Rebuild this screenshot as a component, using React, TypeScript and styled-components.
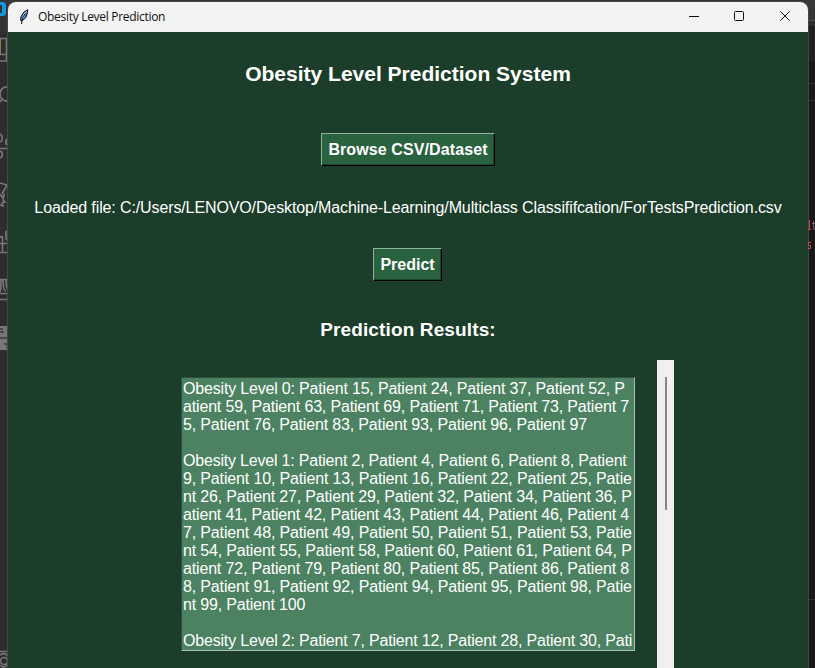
import React from "react";
import styled, { createGlobalStyle } from "styled-components";

const GlobalStyle = createGlobalStyle`
  html, body, #root { margin: 0; height: 100%; }
  body { overflow: hidden; background: #1e1e1e; }
  * { box-sizing: border-box; }
`;

const Desktop = styled.div`
  display: grid;
  grid-template-columns: 8px 800px 7px;
  width: 815px;
  height: 668px;
  overflow: hidden;
  background: linear-gradient(#373737 0 20px, #2d2d2d 40px);
  font-family: "Liberation Sans", Arial, sans-serif;
`;

const EdgeDrawing = styled.svg`
  display: block;
`;

const Window = styled.main`
  display: flex;
  flex-direction: column;
  height: 666px;
  margin-top: 2px;
  border-radius: 8px 8px 0 0;
  overflow: hidden;
  background: #1b3d2a;
  box-shadow: 0 0 0 1px #474747;
`;

const TitleBar = styled.header`
  display: flex;
  align-items: center;
  flex: none;
  height: 30px;
  padding-left: 10px;
  background: #f3f3f3;
`;

const Feather = styled.svg`
  width: 12px;
  height: 16px;
  margin-right: 8px;
`;

const WindowTitle = styled.span`
  flex: 1;
  font: 12px/16px "Open Sans", "Noto Sans", sans-serif;
  letter-spacing: -0.3px;
  color: #111;
`;

const WindowControls = styled.svg`
  display: block;
  width: 138px;
  height: 30px;
`;

const Content = styled.div`
  display: flex;
  flex-direction: column;
  align-items: center;
  color: #fff;
`;

const Heading = styled.h1<{ $size: number; $top: number; $spacing: number }>`
  margin: ${(p) => p.$top}px 0 0;
  font-size: ${(p) => p.$size}px;
  line-height: 24px;
  font-weight: 700;
  letter-spacing: ${(p) => p.$spacing}px;
  white-space: nowrap;
`;

const Button = styled.button<{ $width: number; $top: number; $spacing?: number }>`
  flex: none;
  width: ${(p) => p.$width}px;
  height: 33px;
  margin: ${(p) => p.$top}px ${(p) => p.$width % 2}px 0 0;
  padding: 0;
  border: 1px solid;
  border-color: #8fb29c #000 #000 #8fb29c;
  box-shadow: inset -1px -1px 0 #1d432e;
  background: #2a623f;
  color: #fff;
  font: 700 16px/29px "Liberation Sans", Arial, sans-serif;
  letter-spacing: ${(p) => p.$spacing ?? 0}px;
  white-space: nowrap;
`;

const FileLabel = styled.p`
  margin: 33px 0 0;
  font-size: 16px;
  line-height: 18px;
  letter-spacing: -0.118px;
  white-space: nowrap;
`;

const Results = styled.section`
  display: flex;
  align-items: flex-start;
  align-self: flex-start;
  margin: 18px 0 0 173px;
`;

const ResultsText = styled.div`
  width: 454px;
  height: 274px;
  margin: 17px 22px 0 0;
  padding: 2px 0 0 1px;
  border: 1px solid;
  border-color: #2d503c #a5c0b0 #a5c0b0 #2d503c;
  background: #4c8262;
  overflow: hidden;
`;

const ResultLine = styled.div<{ $spacing: number }>`
  height: 18px;
  font-size: 16px;
  line-height: 18px;
  letter-spacing: ${(p) => p.$spacing}px;
  white-space: pre;
`;

const Scrollbar = styled.div`
  display: flex;
  justify-content: center;
  width: 17px;
  height: 308px;
  padding-top: 17px;
  background: #f0f0f0;
`;

const Thumb = styled.div`
  width: 2px;
  height: 133px;
  margin-left: 1px;
  background: #858585;
`;

const lines: [string, number][] = [
  ["Obesity Level 0: Patient 15, Patient 24, Patient 37, Patient 52, P", -0.18],
  ["atient 59, Patient 63, Patient 69, Patient 71, Patient 73, Patient 7", -0.165],
  ["5, Patient 76, Patient 83, Patient 93, Patient 96, Patient 97", -0.16],
  ["", 0],
  ["Obesity Level 1: Patient 2, Patient 4, Patient 6, Patient 8, Patient", -0.2],
  ["9, Patient 10, Patient 13, Patient 16, Patient 22, Patient 25, Patie", -0.15],
  ["nt 26, Patient 27, Patient 29, Patient 32, Patient 34, Patient 36, P", -0.165],
  ["atient 41, Patient 42, Patient 43, Patient 44, Patient 46, Patient 4", -0.165],
  ["7, Patient 48, Patient 49, Patient 50, Patient 51, Patient 53, Patie", -0.15],
  ["nt 54, Patient 55, Patient 58, Patient 60, Patient 61, Patient 64, P", -0.165],
  ["atient 72, Patient 79, Patient 80, Patient 85, Patient 86, Patient 8", -0.165],
  ["8, Patient 91, Patient 92, Patient 94, Patient 95, Patient 98, Patie", -0.15],
  ["nt 99, Patient 100", -0.18],
  ["", 0],
  ["Obesity Level 2: Patient 7, Patient 12, Patient 28, Patient 30, Pati", -0.185],
];

function LeftEdge() {
  return (
    <EdgeDrawing width="8" height="668" viewBox="0 0 8 668" fill="none" stroke="#777" strokeWidth="1.6">
      <rect width="8" height="32" fill="#333" stroke="none" />
      <rect y="32" width="8" height="636" fill="#2d2d2d" stroke="none" />
      <path d="M0 2h4l2 2v10l-2 2H0v-3h2V5H0z" fill="#1497e0" stroke="none" />
      <path d="M0 38.500h8M0 54.500h8M6.500 39v22M0 61h8" />
      <path d="M0 39v15" stroke="#ad8a5e" />
      <path d="M8 87C3 86 0 90 0 94s4 8 8 7M2 99l-2 3" />
      <path d="M0 134c3 1 3 7 0 8M8 139c-3 0-3 6 0 6M0 148.500h8M0 151c3 1 3 6 0 7" />
      <path d="M0 183l7 2-5 9M0 194l2 3 2-2-1 5 2 2-3 1 1 3-3-1" />
      <path d="M8 231c-3 0-2 2-2 5s0 4 2 4M0 243.500h8M2.500 236v17M0 252.500h8M0 236l2 2" />
      <path d="M0 279.500h8M0 293.500h8M0 299.500h8M1 280c0 6 0 10-1 12M3 280c0 7 1 11 3 11M6 280c0 5 0 8 2 10" />
      <path d="M0 326h8v24H0z" fill="#777" stroke="none" />
      <path d="M0 329h3M0 332h4M0 338h8M4 344h4M6 347h2" stroke="#3b3b3b" />
      <path d="M0 651.500h8M0 655c5-3 8-1 8 5s-4 9-8 5" />
      <circle cx="4" cy="661" r="3.500" />
      <path d="M7.500 9v659" stroke="#454545" strokeWidth="1" />
    </EdgeDrawing>
  );
}

function RightEdge() {
  return (
    <EdgeDrawing width="7" height="668" viewBox="0 0 7 668">
      <rect width="7" height="20" fill="#373737" />
      <rect y="20" width="7" height="1" fill="#505050" />
      <rect y="21" width="7" height="5" fill="#2e2e2e" />
      <rect y="26" width="7" height="35" fill="#202020" />
      <rect y="61" width="7" height="607" fill="#181818" />
      <path d="M0 83.500h7M0 100.500h7M0 599.500h7" stroke="#303030" />
      <path d="M.5 6v662" stroke="#444" />
      <path d="M1.500 220v9M0 229.500h3" stroke="#c94f50" />
      <path d="M5.500 221v8h2M4 223.500h3" stroke="#8a568c" fill="none" />
      <path d="M3 242.500H.5v3h2v3H0" stroke="#c94f50" fill="none" />
    </EdgeDrawing>
  );
}

export default function App() {
  return (
    <>
      <GlobalStyle />
      <Desktop>
        <LeftEdge />
        <Window>
          <TitleBar>
            <Feather viewBox="0 0 12 16">
              <path d="M9.700.7 6 3 3 7.500 2.600 11.500 3.600 12 7.500 9 9.200 5z" fill="#4c8fe2" stroke="#111" strokeWidth="1" />
              <path d="M8.300 2.500 5.500 6 4 10" stroke="#c2e4ff" fill="none" />
              <path d="M7.500 4.500 4.500 8.500 3.500 15" stroke="#111" fill="none" />
            </Feather>
            <WindowTitle>Obesity Level Prediction</WindowTitle>
            <WindowControls viewBox="0 0 138 30" fill="none" stroke="#111" strokeWidth="1">
              <path d="M19 14.500h10" />
              <rect x="64.500" y="9.500" width="9" height="9" rx="1" />
              <path d="m110.300 9.300 9.400 9.400m0-9.400-9.400 9.400" />
            </WindowControls>
          </TitleBar>
          <Content>
            <Heading $size={21} $top={30} $spacing={0}>Obesity Level Prediction System</Heading>
            <Button $width={174} $top={47} $spacing={0.1}>Browse CSV/Dataset</Button>
            <FileLabel>
              Loaded file: C:/Users/LENOVO/Desktop/Machine-Learning/Multiclass Classififcation/ForTestsPrediction.csv
            </FileLabel>
            <Button $width={69} $top={31}>Predict</Button>
            <Heading as="h2" $size={19} $top={37} $spacing={0.13}>Prediction Results:</Heading>
            <Results>
              <ResultsText>
                {lines.map(([text, spacing], i) => (
                  <ResultLine key={i} $spacing={spacing}>{text}</ResultLine>
                ))}
              </ResultsText>
              <Scrollbar><Thumb /></Scrollbar>
            </Results>
          </Content>
        </Window>
        <RightEdge />
      </Desktop>
    </>
  );
}
